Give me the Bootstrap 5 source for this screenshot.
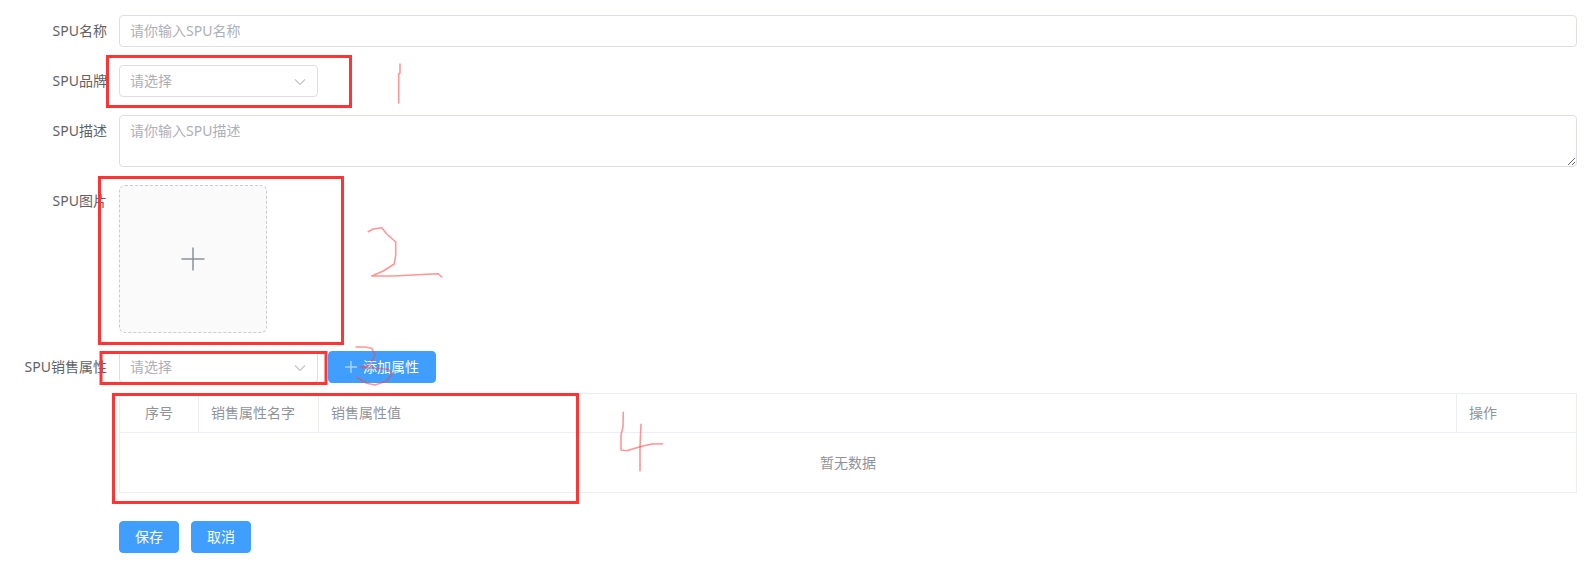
<!DOCTYPE html>
<html lang="en">
<head>
    <meta charset="UTF-8">
    <meta name="viewport" content="width=device-width, initial-scale=1.0">
    <title>SPU</title>
    <link href="https://cdn.jsdelivr.net/npm/bootstrap@5.3.0/dist/css/bootstrap.min.css" rel="stylesheet">
    <style>
        body {
            background-color: #fff;
            font-family: "Noto Sans", "Noto Sans CJK SC", sans-serif;
            font-size: 14px;
            color: #606266;
        }
        .spu-form {
            position: relative;
            height: 588px;
            padding: 15px 16px 0 0;
        }
        .form-line {
            display: flex;
            gap: 12px;
            margin-bottom: 18px;
        }
        .form-line.tight {
            margin-bottom: 10px;
        }
        .line-label {
            flex: 0 0 107px;
            text-align: right;
            line-height: 32px;
            white-space: nowrap;
        }
        .line-spacer {
            flex: 0 0 119px;
        }
        .line-body {
            flex: 1 1 auto;
            min-width: 0;
        }
        .line-gap {
            gap: 10px;
        }
        .spu-input.form-control {
            height: 32px;
            padding: 0 10px 2px;
            font-size: 14px;
            color: #606266;
            border: 1px solid #dcdfe6;
            border-radius: 4px;
        }
        .spu-input::placeholder {
            color: #adb0b8;
        }
        textarea.spu-input.form-control {
            height: 52px;
            min-height: 52px;
            padding: 4px 10px;
            line-height: 21px;
        }
        .select-box {
            position: relative;
            width: 199px;
        }
        .select-arrow {
            position: absolute;
            top: 13px;
            right: 12px;
        }
        .upload-box {
            width: 148px;
            height: 148px;
            background-color: #fafafa;
            border: 1px dashed #cbcbd0;
            border-radius: 6px;
        }
        .btn.spu-btn {
            height: 32px;
            padding: 0 15px;
            font-size: 14px;
            line-height: 30px;
            color: #fff;
            background-color: #409eff;
            border: 1px solid #409eff;
            border-radius: 4px;
        }
        .btn.spu-btn.attr-btn {
            gap: 6px;
            padding: 0 16px;
        }
        .attr-table {
            width: 100%;
            margin: 0 0 28px;
            table-layout: fixed;
            border: 1px solid #ebeef5;
        }
        .col-index {
            width: 79px;
        }
        .col-name {
            width: 120px;
        }
        .col-action {
            width: 120px;
        }
        .attr-table th {
            height: 39px;
            padding: 0 12px 2px;
            font-weight: 400;
            color: #909399;
            border-bottom: 1px solid #ebeef5;
            border-right: 1px solid #ebeef5;
        }
        .attr-table th:last-child {
            border-right: 0;
        }
        .attr-table td {
            height: 60px;
            padding: 0;
            color: #909399;
            text-align: center;
        }
        .mark-layer {
            position: absolute;
            top: 0;
            left: 0;
            pointer-events: none;
        }
    </style>
</head>
<body>
    <div class="spu-form">
        <div class="form-line">
            <div class="line-label">SPU名称</div>
            <div class="line-body">
                <input class="form-control spu-input" type="text" placeholder="请你输入SPU名称">
            </div>
        </div>
        <div class="form-line">
            <div class="line-label">SPU品牌</div>
            <div class="line-body">
                <div class="select-box">
                    <input class="form-control spu-input" type="text" placeholder="请选择" readonly>
                    <svg class="select-arrow" width="12" height="8" viewBox="0 0 12 8"><path d="M1 1.5 6 6.5 11 1.5" fill="none" stroke="#c0c4cc" stroke-width="1.2"/></svg>
                </div>
            </div>
        </div>
        <div class="form-line">
            <div class="line-label">SPU描述</div>
            <div class="line-body">
                <textarea class="form-control spu-input" placeholder="请你输入SPU描述"></textarea>
            </div>
        </div>
        <div class="form-line">
            <div class="line-label">SPU图片</div>
            <div class="line-body">
                <div class="upload-box d-flex align-items-center justify-content-center">
                    <svg width="24" height="24" viewBox="0 0 24 24"><path d="M0.5 12H23.5M12 0.5V23.5" fill="none" stroke="#8c939d" stroke-width="1.5"/></svg>
                </div>
            </div>
        </div>
        <div class="form-line tight">
            <div class="line-label">SPU销售属性</div>
            <div class="line-body d-flex line-gap">
                <div class="select-box">
                    <input class="form-control spu-input" type="text" placeholder="请选择" readonly>
                    <svg class="select-arrow" width="12" height="8" viewBox="0 0 12 8"><path d="M1 1.5 6 6.5 11 1.5" fill="none" stroke="#c0c4cc" stroke-width="1.2"/></svg>
                </div>
                <button class="btn spu-btn attr-btn d-inline-flex align-items-center" type="button">
                    <svg width="12" height="12" viewBox="0 0 12 12"><path d="M0 6H12M6 0V12" fill="none" stroke="#a6d2ff" stroke-width="1.5"/></svg>
                    <span>添加属性</span>
                </button>
            </div>
        </div>
        <div class="d-flex">
            <div class="line-spacer"></div>
            <div class="line-body">
                <table class="attr-table">
                    <colgroup>
                        <col class="col-index">
                        <col class="col-name">
                        <col>
                        <col class="col-action">
                    </colgroup>
                    <thead>
                        <tr>
                            <th class="text-center">序号</th>
                            <th>销售属性名字</th>
                            <th>销售属性值</th>
                            <th>操作</th>
                        </tr>
                    </thead>
                    <tbody>
                        <tr>
                            <td colspan="4">暂无数据</td>
                        </tr>
                    </tbody>
                </table>
                <div class="d-flex">
                    <button class="btn spu-btn me-2" type="button">保存</button>
                    <button class="btn spu-btn ms-1" type="button">取消</button>
                </div>
            </div>
        </div>

        <!-- hand drawn annotations on top of the screenshot -->
        <svg class="mark-layer" width="1593" height="588" viewBox="0 0 1593 588">
            <g fill="none" stroke="#ff3535" stroke-width="3">
                <rect x="107.5" y="56.5" width="243" height="50"/>
                <rect x="99.5" y="177.5" width="243" height="166"/>
                <rect x="101" y="352.5" width="225" height="31"/>
                <rect x="113.5" y="394.5" width="464" height="108"/>
            </g>
            <g fill="none" stroke="#ff4040" stroke-opacity="0.55" stroke-width="1.6" stroke-linejoin="round" stroke-linecap="round">
                <path d="M400 64V73L398.7 74V103"/>
                <path d="M368.3 231.7 373 229 381.7 227.7 386.7 234 395.7 242V255L394.3 264 383.3 271 371.7 276 393 276 431.7 274 438.3 273.7 441.7 277"/>
                <path d="M356 347H365L371.7 348.3 375 355 370 365 360 367.3 375 368.3 388.3 369.3 392.7 373.3 386.7 381 375 385 366.7 383.3 356.7 377.3"/>
                <path d="M623.3 412.3 623 426.7 621 435V450L626.7 450.7 640 446.7 651.7 444 662.7 443.7"/>
                <path d="M641 424.3 640 446.7V470.7"/>
            </g>
        </svg>
    </div>
    <script src="https://cdn.jsdelivr.net/npm/bootstrap@5.3.0/dist/js/bootstrap.bundle.min.js"></script>
</body>
</html>
